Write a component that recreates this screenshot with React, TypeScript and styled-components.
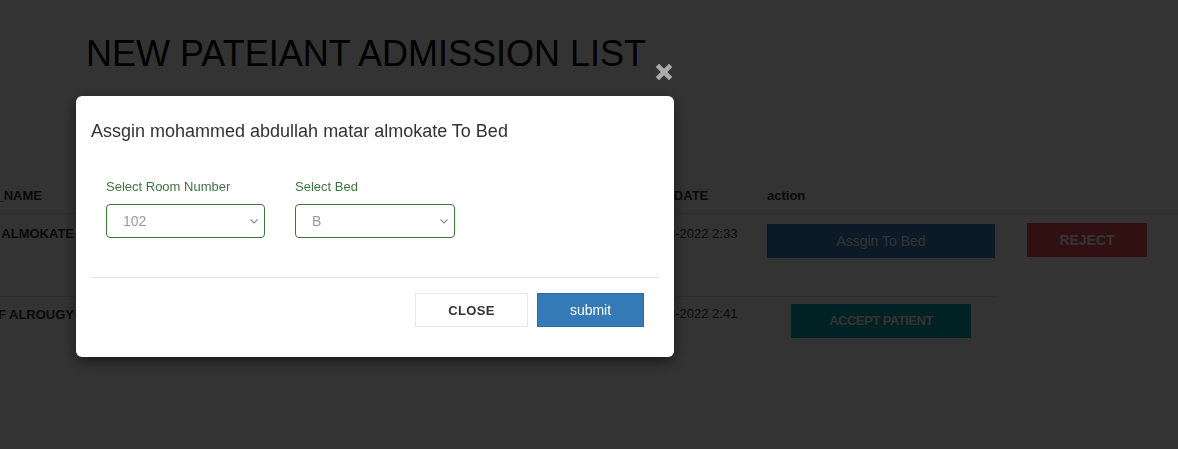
import React from 'react';
import styled, { createGlobalStyle } from 'styled-components';

const GlobalStyle = createGlobalStyle`
  * { box-sizing: border-box; }
  html, body { margin: 0; padding: 0; background: #fff; overflow: hidden; }
  body {
    font-family: "Liberation Sans", Arial, Helvetica, sans-serif;
    font-size: 13px;
    color: #333;
  }
`;

const Page = styled.div`
  width: 1178px;
  height: 449px;
  overflow: hidden;
`;

const Title = styled.h1`
  margin: 34px 0 0 86px;
  font-size: 36px;
  font-weight: 400;
  line-height: 1.1;
  color: #000;
  white-space: nowrap;
`;

const Table = styled.div`
  margin: 104px 0 0 -220px;
  width: 1500px;
`;

const Row = styled.div<{ $head?: boolean; $pt: number; $h: number }>`
  display: grid;
  grid-template-columns: 302px 277px 277px 131px 228px 152px;
  height: ${(p) => p.$h}px;
  border-bottom: ${(p) => (p.$head ? '1px solid #ddd' : 'none')};
  & > * {
    padding-top: ${(p) => p.$pt}px;
  }
`;

const Cell = styled.div<{ $align?: string; $pr?: number; $bold?: boolean; $line?: boolean; $pl?: number; $dy?: number }>`
  text-align: ${(p) => p.$align || 'left'};
  padding-right: ${(p) => p.$pr || 0}px;
  padding-left: ${(p) => p.$pl || 0}px;
  font-weight: ${(p) => (p.$bold ? 700 : 400)};
  font-size: 13px;
  line-height: 18.5px;
  color: #333;
  white-space: nowrap;
  overflow: hidden;
  border-bottom: ${(p) => (p.$line ? '1px solid #ddd' : 'none')};
  & > span {
    display: inline-block;
    margin-top: ${(p) => p.$dy || 0}px;
  }
`;

const TableButton = styled.button<{ $bg: string; $w: number; $bold?: boolean; $size: number; $mt?: number; $ls?: number }>`
  display: inline-block;
  width: ${(p) => p.$w}px;
  height: 34px;
  margin-top: ${(p) => p.$mt || 0}px;
  border: none;
  background: ${(p) => p.$bg};
  color: #fff;
  font-family: inherit;
  font-size: ${(p) => p.$size}px;
  font-weight: ${(p) => (p.$bold ? 700 : 400)};
  letter-spacing: ${(p) => p.$ls || 0}px;
  padding: 0;
  cursor: pointer;
`;

const Overlay = styled.div`
  position: fixed;
  inset: 0;
  background: rgba(0, 0, 0, 0.8);
`;

const CloseIcon = styled.svg`
  position: fixed;
  left: 655px;
  top: 63px;
  width: 18px;
  height: 18px;
`;

const Modal = styled.div`
  position: fixed;
  left: 76px;
  top: 96px;
  width: 598px;
  background: #fff;
  border-radius: 6px;
  box-shadow: 0 5px 15px rgba(0, 0, 0, 0.5);
`;

const ModalHeader = styled.div`
  padding: 25px 15px 0;
`;

const ModalTitle = styled.h4`
  margin: 0;
  font-size: 18px;
  line-height: 20px;
  font-weight: 400;
  color: #333;
`;

const ModalBody = styled.div`
  padding: 36px 30px 39px;
  display: flex;
  gap: 30px;
`;

const Field = styled.div`
  display: flex;
  flex-direction: column;
`;

const Label = styled.label`
  font-size: 13px;
  line-height: 18px;
  color: #3c763d;
  margin-bottom: 9px;
  margin-top: 1px;
`;

const SelectWrap = styled.div<{ $w: number }>`
  position: relative;
  width: ${(p) => p.$w}px;
  height: 34px;
  margin-top: -1px;
`;

const Select = styled.select`
  appearance: none;
  -webkit-appearance: none;
  width: 100%;
  height: 34px;
  border: 1px solid #3c763d;
  border-radius: 4px;
  background: #fff;
  padding: 0 0 0 16px;
  font-family: inherit;
  font-size: 14px;
  color: #999;
  outline: none;
`;

const Chevron = styled.svg`
  position: absolute;
  right: 7px;
  top: 15px;
  width: 8px;
  height: 5px;
  pointer-events: none;
`;

const Divider = styled.hr`
  margin: 0 15px;
  border: none;
  border-top: 1px solid #e5e5e5;
  height: 0;
`;

const ModalFooter = styled.div`
  display: flex;
  justify-content: flex-end;
  gap: 9px;
  padding: 15px 30px 30px;
`;

const FooterButton = styled.button<{ $primary?: boolean; $w: number }>`
  width: ${(p) => p.$w}px;
  height: 34px;
  border: 1px solid ${(p) => (p.$primary ? '#2e6da4' : '#e8e8e8')};
  background: ${(p) => (p.$primary ? '#337ab7' : '#fff')};
  color: ${(p) => (p.$primary ? '#fff' : '#333')};
  font-family: inherit;
  font-size: ${(p) => (p.$primary ? 14 : 13)}px;
  font-weight: ${(p) => (p.$primary ? 400 : 700)};
  letter-spacing: ${(p) => (p.$primary ? 0 : 0.3)}px;
  padding: 0;
  cursor: pointer;
`;

const ChevronDown = () => (
  <Chevron viewBox="0 0 8 5">
    <path d="M0.5 0.5 L4 4 L7.5 0.5" fill="none" stroke="#8a8a8a" strokeWidth="1.1" />
  </Chevron>
);

export default function App() {
  return (
    <Page>
      <GlobalStyle />
      <Title>NEW PATEIANT ADMISSION LIST</Title>
      <Table>
        <Row $head $pt={9} $h={36}>
          <Cell $bold $align="right" $pr={40}>PATIENT_NAME</Cell>
          <Cell $bold>GENDER</Cell>
          <Cell $bold>PHONE</Cell>
          <Cell $bold $pl={1}>ADM_DATE</Cell>
          <Cell $bold>action</Cell>
          <Cell />
        </Row>
        <Row $pt={10} $h={83}>
          <Cell $bold $align="right" $pr={8} $line $dy={1}><span>MOHAMMED ABDULLAH MATAR ALMOKATE</span></Cell>
          <Cell $line $dy={1}><span>MALE</span></Cell>
          <Cell $line $dy={1}><span>0551234567</span></Cell>
          <Cell $line $pl={6} $dy={1}><span>03-03-2022 2:33</span></Cell>
          <Cell $align="center" $line>
            <TableButton $bg="#3780bd" $w={228} $size={14}>Assgin To Bed</TableButton>
          </Cell>
          <Cell $pl={32}>
            <TableButton $bg="#ef5350" $w={120} $size={14} $bold $mt={-1}>REJECT</TableButton>
          </Cell>
        </Row>
        <Row $pt={7} $h={60}>
          <Cell $bold $align="right" $pr={8} $dy={2}><span>ABDULLAH YOUSEF ALROUGY</span></Cell>
          <Cell $dy={2}><span>MALE</span></Cell>
          <Cell $dy={2}><span>0557654321</span></Cell>
          <Cell $pl={6} $dy={1}><span>03-03-2022 2:41</span></Cell>
          <Cell $align="center">
            <TableButton $bg="#00abb8" $w={180} $size={13} $ls={-0.5} $bold>ACCEPT PATIENT</TableButton>
          </Cell>
          <Cell />
        </Row>
      </Table>

      <Overlay />
      <CloseIcon viewBox="0 0 18 18">
        <path d="M4 4 L14 14 M14 4 L4 14" stroke="#ababab" strokeWidth="4.6" strokeLinecap="square" />
      </CloseIcon>

      <Modal>
        <ModalHeader>
          <ModalTitle>Assgin mohammed abdullah matar almokate To Bed</ModalTitle>
        </ModalHeader>
        <ModalBody>
          <Field>
            <Label>Select Room Number</Label>
            <SelectWrap $w={159}>
              <Select defaultValue="102">
                <option value="102">102</option>
                <option value="103">103</option>
              </Select>
              <ChevronDown />
            </SelectWrap>
          </Field>
          <Field>
            <Label>Select Bed</Label>
            <SelectWrap $w={160}>
              <Select defaultValue="B">
                <option value="A">A</option>
                <option value="B">B</option>
              </Select>
              <ChevronDown />
            </SelectWrap>
          </Field>
        </ModalBody>
        <Divider />
        <ModalFooter>
          <FooterButton $w={113}>CLOSE</FooterButton>
          <FooterButton $primary $w={107}>submit</FooterButton>
        </ModalFooter>
      </Modal>
    </Page>
  );
}
